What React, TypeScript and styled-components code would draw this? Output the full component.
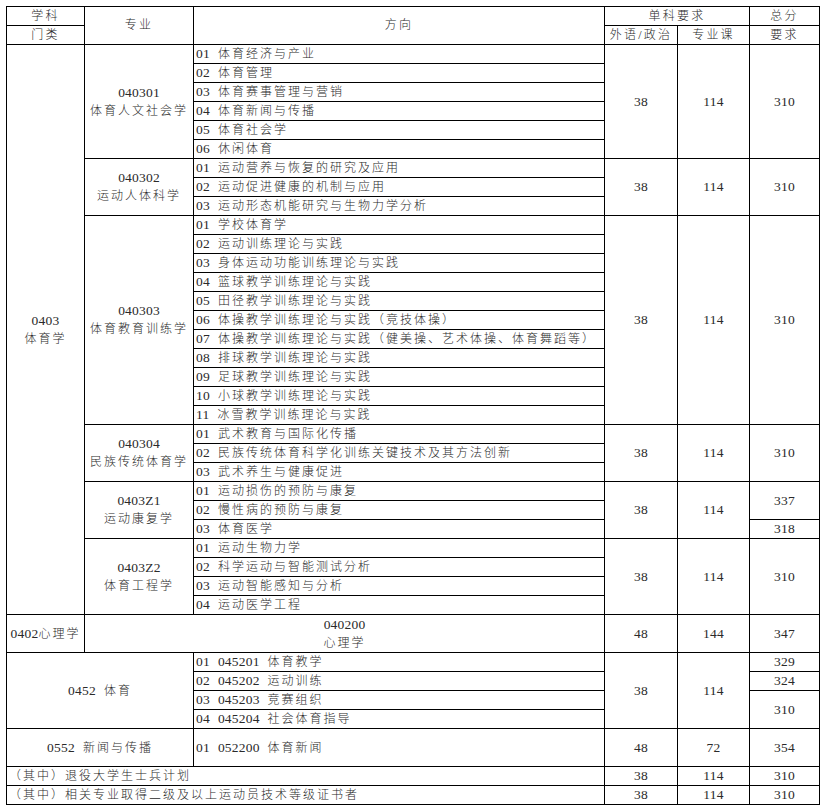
import React from 'react';
import styled, { createGlobalStyle } from 'styled-components';

const GlobalStyle = createGlobalStyle`
  body {
    margin: 0;
    background: #fff;
  }
`;

const Page = styled.div`
  padding: 6px;
`;

const Table = styled.table`
  border-collapse: collapse;
  table-layout: fixed;
  width: 814px;
  font-family: 'Liberation Serif', 'Noto Sans CJK SC', serif;
  font-size: 12px;
  font-weight: 300;
  color: #2a2a2a;
`;

const Row = styled.tr<{ $h?: number }>`
  height: ${(p) => p.$h ?? 19}px;
`;

const Cell = styled.td<{ $align?: 'left' | 'center' }>`
  border: 1px solid #000;
  padding: 0 ${(p) => (p.$align === 'left' ? '0 0 2px' : '1px')};
  text-align: ${(p) => p.$align ?? 'center'};
  vertical-align: middle;
  line-height: 18px;
  letter-spacing: 2px;
  white-space: nowrap;
  overflow: hidden;
`;

const HeadCell = styled(Cell).attrs({ as: 'th' })`
  font-weight: 300;
  letter-spacing: 2.2px;
  line-height: 17px;
`;

const Num = styled.span<{ $gap?: number }>`
  font-size: 13.5px;
  font-weight: normal;
  letter-spacing: 0.2px;
  margin-right: ${(p) => p.$gap ?? 0}px;
`;

type Major = {
  code: string;
  name: string;
  dirs: string[];
  totals: [number, number][];
};

const majors: Major[] = [
  {
    code: '040301',
    name: '体育人文社会学',
    dirs: ['体育经济与产业', '体育管理', '体育赛事管理与营销', '体育新闻与传播', '体育社会学', '休闲体育'],
    totals: [[310, 6]],
  },
  {
    code: '040302',
    name: '运动人体科学',
    dirs: ['运动营养与恢复的研究及应用', '运动促进健康的机制与应用', '运动形态机能研究与生物力学分析'],
    totals: [[310, 3]],
  },
  {
    code: '040303',
    name: '体育教育训练学',
    dirs: [
      '学校体育学',
      '运动训练理论与实践',
      '身体运动功能训练理论与实践',
      '篮球教学训练理论与实践',
      '田径教学训练理论与实践',
      '体操教学训练理论与实践（竞技体操）',
      '体操教学训练理论与实践（健美操、艺术体操、体育舞蹈等）',
      '排球教学训练理论与实践',
      '足球教学训练理论与实践',
      '小球教学训练理论与实践',
      '冰雪教学训练理论与实践',
    ],
    totals: [[310, 11]],
  },
  {
    code: '040304',
    name: '民族传统体育学',
    dirs: ['武术教育与国际化传播', '民族传统体育科学化训练关键技术及其方法创新', '武术养生与健康促进'],
    totals: [[310, 3]],
  },
  {
    code: '0403Z1',
    name: '运动康复学',
    dirs: ['运动损伤的预防与康复', '慢性病的预防与康复', '体育医学'],
    totals: [
      [337, 2],
      [318, 1],
    ],
  },
  {
    code: '0403Z2',
    name: '体育工程学',
    dirs: ['运动生物力学', '科学运动与智能测试分析', '运动智能感知与分析', '运动医学工程'],
    totals: [[310, 4]],
  },
];

const sportDirs = [
  ['045201', '体育教学'],
  ['045202', '运动训练'],
  ['045203', '竞赛组织'],
  ['045204', '社会体育指导'],
];

const pad = (n: number) => String(n).padStart(2, '0');

const totalRows = majors.reduce((s, m) => s + m.dirs.length, 0);

// total cell for a given direction index, following the row spans
const totalCell = (totals: [number, number][], index: number) => {
  let start = 0;
  for (const [value, span] of totals) {
    if (index === start) {
      return (
        <Cell rowSpan={span}>
          <Num>{value}</Num>
        </Cell>
      );
    }
    start += span;
  }
  return null;
};

const Direction = ({ no, code, text }: { no: number; code?: string; text: string }) => (
  <Cell $align="left">
    <Num $gap={8}>{pad(no)}</Num>
    {code && <Num $gap={8}>{code}</Num>}
    {text}
  </Cell>
);

const App = () => {
  return (
    <Page>
      <GlobalStyle />
      <Table>
        <colgroup>
          <col style={{ width: 78 }} />
          <col style={{ width: 109 }} />
          <col style={{ width: 411 }} />
          <col style={{ width: 73 }} />
          <col style={{ width: 72 }} />
          <col style={{ width: 70 }} />
        </colgroup>
        <thead>
          <Row>
            <HeadCell>学科</HeadCell>
            <HeadCell rowSpan={2}>专业</HeadCell>
            <HeadCell rowSpan={2}>方向</HeadCell>
            <HeadCell colSpan={2}>单科要求</HeadCell>
            <HeadCell>总分</HeadCell>
          </Row>
          <Row>
            <HeadCell>门类</HeadCell>
            <HeadCell>外语/政治</HeadCell>
            <HeadCell>专业课</HeadCell>
            <HeadCell>要求</HeadCell>
          </Row>
        </thead>
        <tbody>
          {majors.map((m, mi) =>
            m.dirs.map((d, di) => (
              <Row key={`${m.code}_${di}`}>
                {mi === 0 && di === 0 && (
                  <Cell rowSpan={totalRows}>
                    <Num>0403</Num>
                    <br />
                    体育学
                  </Cell>
                )}
                {di === 0 && (
                  <Cell rowSpan={m.dirs.length}>
                    <Num>{m.code}</Num>
                    <br />
                    {m.name}
                  </Cell>
                )}
                <Direction no={di + 1} text={d} />
                {di === 0 && (
                  <>
                    <Cell rowSpan={m.dirs.length}>
                      <Num>38</Num>
                    </Cell>
                    <Cell rowSpan={m.dirs.length}>
                      <Num>114</Num>
                    </Cell>
                  </>
                )}
                {totalCell(m.totals, di)}
              </Row>
            ))
          )}
          <Row $h={38}>
            <Cell>
              <Num>0402</Num>心理学
            </Cell>
            <Cell colSpan={2}>
              <Num>040200</Num>
              <br />
              心理学
            </Cell>
            <Cell>
              <Num>48</Num>
            </Cell>
            <Cell>
              <Num>144</Num>
            </Cell>
            <Cell>
              <Num>347</Num>
            </Cell>
          </Row>
          {sportDirs.map(([code, text], i) => (
            <Row key={code}>
              {i === 0 && (
                <Cell colSpan={2} rowSpan={4}>
                  <Num $gap={8}>0452</Num>体育
                </Cell>
              )}
              <Direction no={i + 1} code={code} text={text} />
              {i === 0 && (
                <>
                  <Cell rowSpan={4}>
                    <Num>38</Num>
                  </Cell>
                  <Cell rowSpan={4}>
                    <Num>114</Num>
                  </Cell>
                </>
              )}
              {totalCell(
                [
                  [329, 1],
                  [324, 1],
                  [310, 2],
                ],
                i
              )}
            </Row>
          ))}
          <Row $h={38}>
            <Cell colSpan={2}>
              <Num $gap={8}>0552</Num>新闻与传播
            </Cell>
            <Direction no={1} code="052200" text="体育新闻" />
            <Cell>
              <Num>48</Num>
            </Cell>
            <Cell>
              <Num>72</Num>
            </Cell>
            <Cell>
              <Num>354</Num>
            </Cell>
          </Row>
          {['（其中）退役大学生士兵计划', '（其中）相关专业取得二级及以上运动员技术等级证书者'].map((t) => (
            <Row key={t}>
              <Cell colSpan={3} $align="left">
                {t}
              </Cell>
              <Cell>
                <Num>38</Num>
              </Cell>
              <Cell>
                <Num>114</Num>
              </Cell>
              <Cell>
                <Num>310</Num>
              </Cell>
            </Row>
          ))}
        </tbody>
      </Table>
    </Page>
  );
};

export default App;
